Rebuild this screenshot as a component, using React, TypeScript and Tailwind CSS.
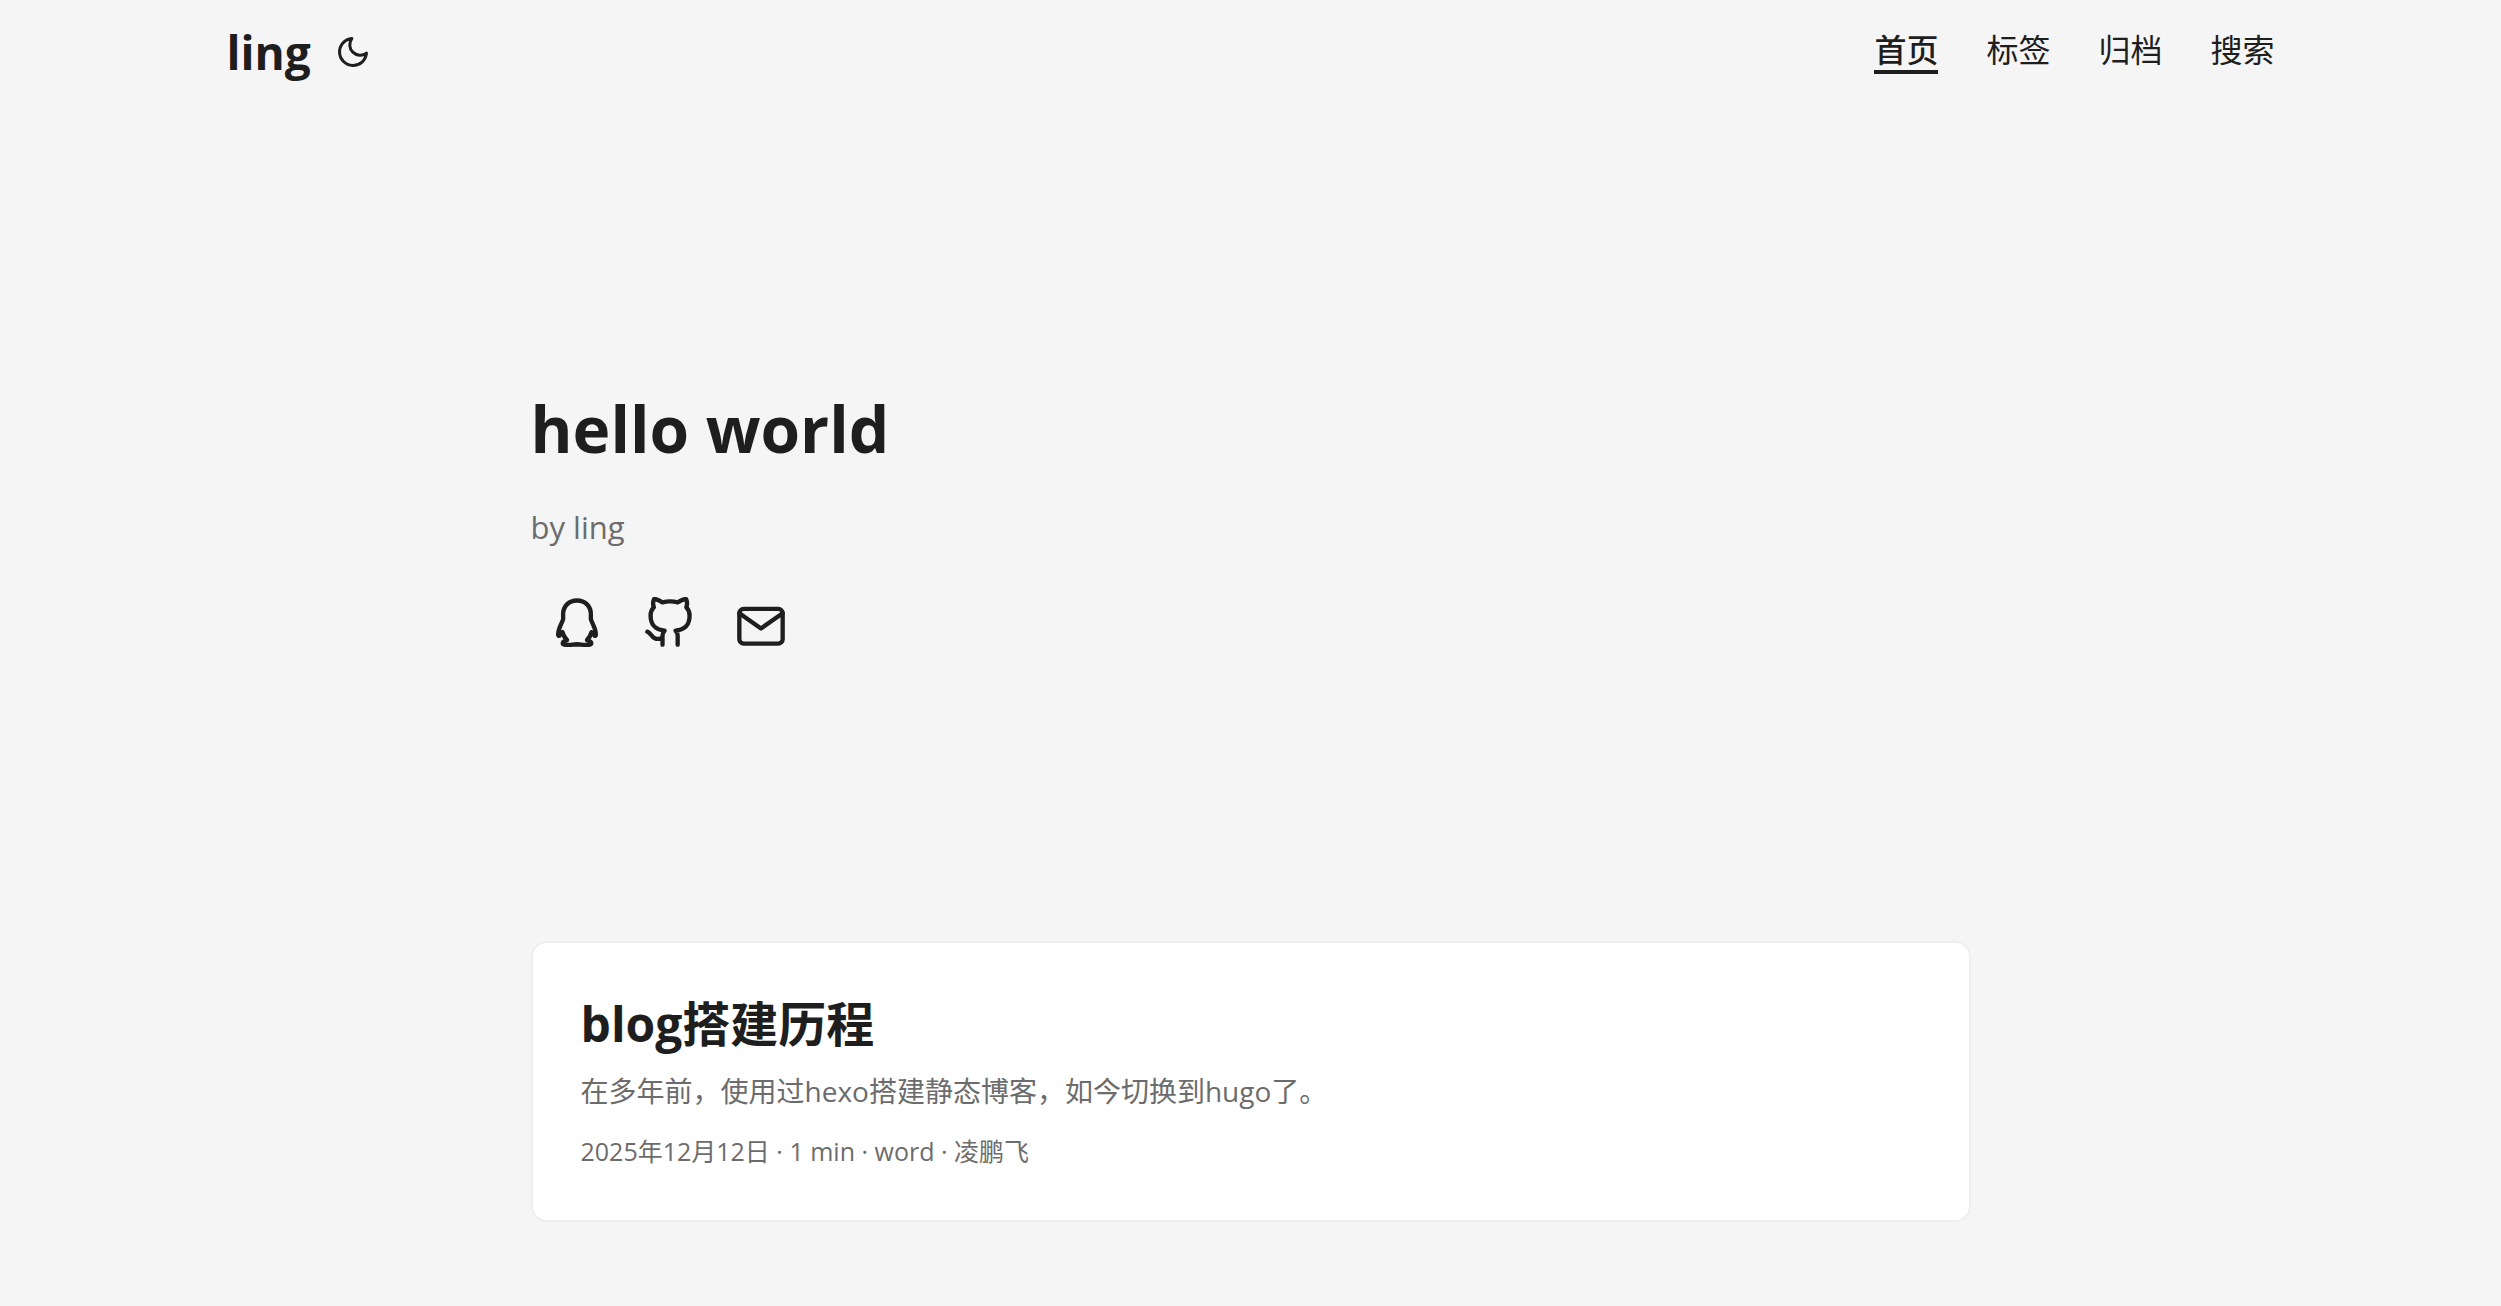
import React from "react";

const menu = [
  { name: "首页", href: "#home", active: true },
  { name: "标签", href: "#tags", active: false },
  { name: "归档", href: "#archives", active: false },
  { name: "搜索", href: "#search", active: false },
];

const iconProps = {
  viewBox: "0 0 24 24",
  fill: "none",
  stroke: "currentColor",
  strokeWidth: 2,
  strokeLinecap: "round" as const,
  strokeLinejoin: "round" as const,
};

const MoonIcon = () => (
  <svg {...iconProps} className="h-9 w-9">
    <path d="M21 12.79A9 9 0 1 1 11.21 3 7 7 0 0 0 21 12.79z" />
  </svg>
);

const QQIcon = () => (
  <svg {...iconProps} className="h-13 w-13">
    <path d="M12 1.6C8.2 1.6 5.6 4.3 5.6 7.9V10.2C5.2 12 3.4 14 3.3 17.2C3.3 18.2 3.8 18.1 4.1 17.6L5.3 16.2C5.7 17.8 6.5 19 7.4 19.9C6.2 20.2 5.4 20.7 5.4 21.3C5.4 22.3 8 22.1 9 22.1L12 21.8L15 22.1C16 22.1 18.6 22.3 18.6 21.3C18.6 20.7 17.8 20.2 16.6 19.9C17.5 19 18.3 17.8 18.7 16.2L19.9 17.6C20.2 18.1 20.7 18.2 20.7 17.2C20.6 14 18.8 12 18.4 10.2V7.9C18.4 4.3 15.8 1.6 12 1.6Z" />
  </svg>
);

const GithubIcon = () => (
  <svg {...iconProps} className="h-13 w-13">
    <path d="M9 19c-5 1.5-5-2.5-7-3m14 6v-3.87a3.37 3.37 0 0 0-.94-2.61c3.14-.35 6.44-1.54 6.44-7A5.44 5.44 0 0 0 20 4.77 5.07 5.07 0 0 0 19.91 1S18.73.65 16 2.48a13.38 13.38 0 0 0-7 0C6.27.65 5.09 1 5.09 1A5.07 5.07 0 0 0 5 4.77a5.44 5.44 0 0 0-1.5 3.78c0 5.42 3.3 6.61 6.44 7A3.37 3.37 0 0 0 9 18.13V22" />
  </svg>
);

const MailIcon = () => (
  <svg {...iconProps} viewBox="0 0 24 21" className="h-13 w-13">
    <path d="M4 4h16c1.1 0 2 .9 2 2v12c0 1.1-.9 2-2 2H4c-1.1 0-2-.9-2-2V6c0-1.1.9-2 2-2z" />
    <polyline points="22,6 12,13 2,6" />
  </svg>
);

const socials = [
  { label: "QQ", href: "#qq", icon: <QQIcon /> },
  { label: "GitHub", href: "#github", icon: <GithubIcon /> },
  { label: "Email", href: "#email", icon: <MailIcon /> },
];

const Header = () => (
  <header className="mx-auto flex w-full max-w-[2144px] items-center justify-between px-12">
    <div className="flex items-center gap-6">
      <a href="#home" className="text-[46px] leading-[104px] font-bold">
        ling
      </a>
      <button type="button" aria-label="Toggle theme">
        <MoonIcon />
      </button>
    </div>
    <nav>
      <ul className="flex gap-12 text-[32px] leading-10">
        {menu.map((item) => (
          <li key={item.name}>
            <a
              href={item.href}
              className={
                item.active
                  ? "block border-b-4 border-[#1e1e1e] font-medium"
                  : "block border-b-4 border-transparent"
              }
            >
              {item.name}
            </a>
          </li>
        ))}
      </ul>
    </nav>
  </header>
);

const Hero = () => (
  <section className="mb-12 flex min-h-[737px] flex-col justify-center">
    <h1 className="text-[64px] leading-[90px] font-bold">hello world</h1>
    <p className="mt-7 text-[31px] leading-[51px] text-[#6c6c6c]">by ling</p>
    <div className="mt-7 flex items-center">
      {socials.map((social) => (
        <a
          key={social.label}
          href={social.href}
          aria-label={social.label}
          className="px-5 py-4"
        >
          {social.icon}
        </a>
      ))}
    </div>
  </section>
);

const PostCard = () => (
  <article className="rounded-2xl border-2 border-[#eeeeee] bg-white p-12">
    <h2 className="text-5xl leading-[66px] font-bold">
      <a href="#post">blog搭建历程</a>
    </h2>
    <p className="mt-3 mb-4 text-[28px] leading-[45px] text-[#6c6c6c]">
      在多年前，使用过hexo搭建静态博客，如今切换到hugo了。
    </p>
    <footer className="text-[25px] leading-[42px] text-[#6c6c6c]">
      2025年12月12日 · 1 min · word · 凌鹏飞
    </footer>
  </article>
);

const App = () => {
  return (
    <div
      lang="zh-CN"
      className="min-h-screen bg-[#f5f5f5] font-['Open_Sans','Noto_Sans_CJK_SC',sans-serif] text-[#1e1e1e]"
    >
      <Header />
      <main className="mx-auto w-full max-w-[1440px] pt-13 pb-12">
        <Hero />
        <PostCard />
      </main>
    </div>
  );
};

export default App;
